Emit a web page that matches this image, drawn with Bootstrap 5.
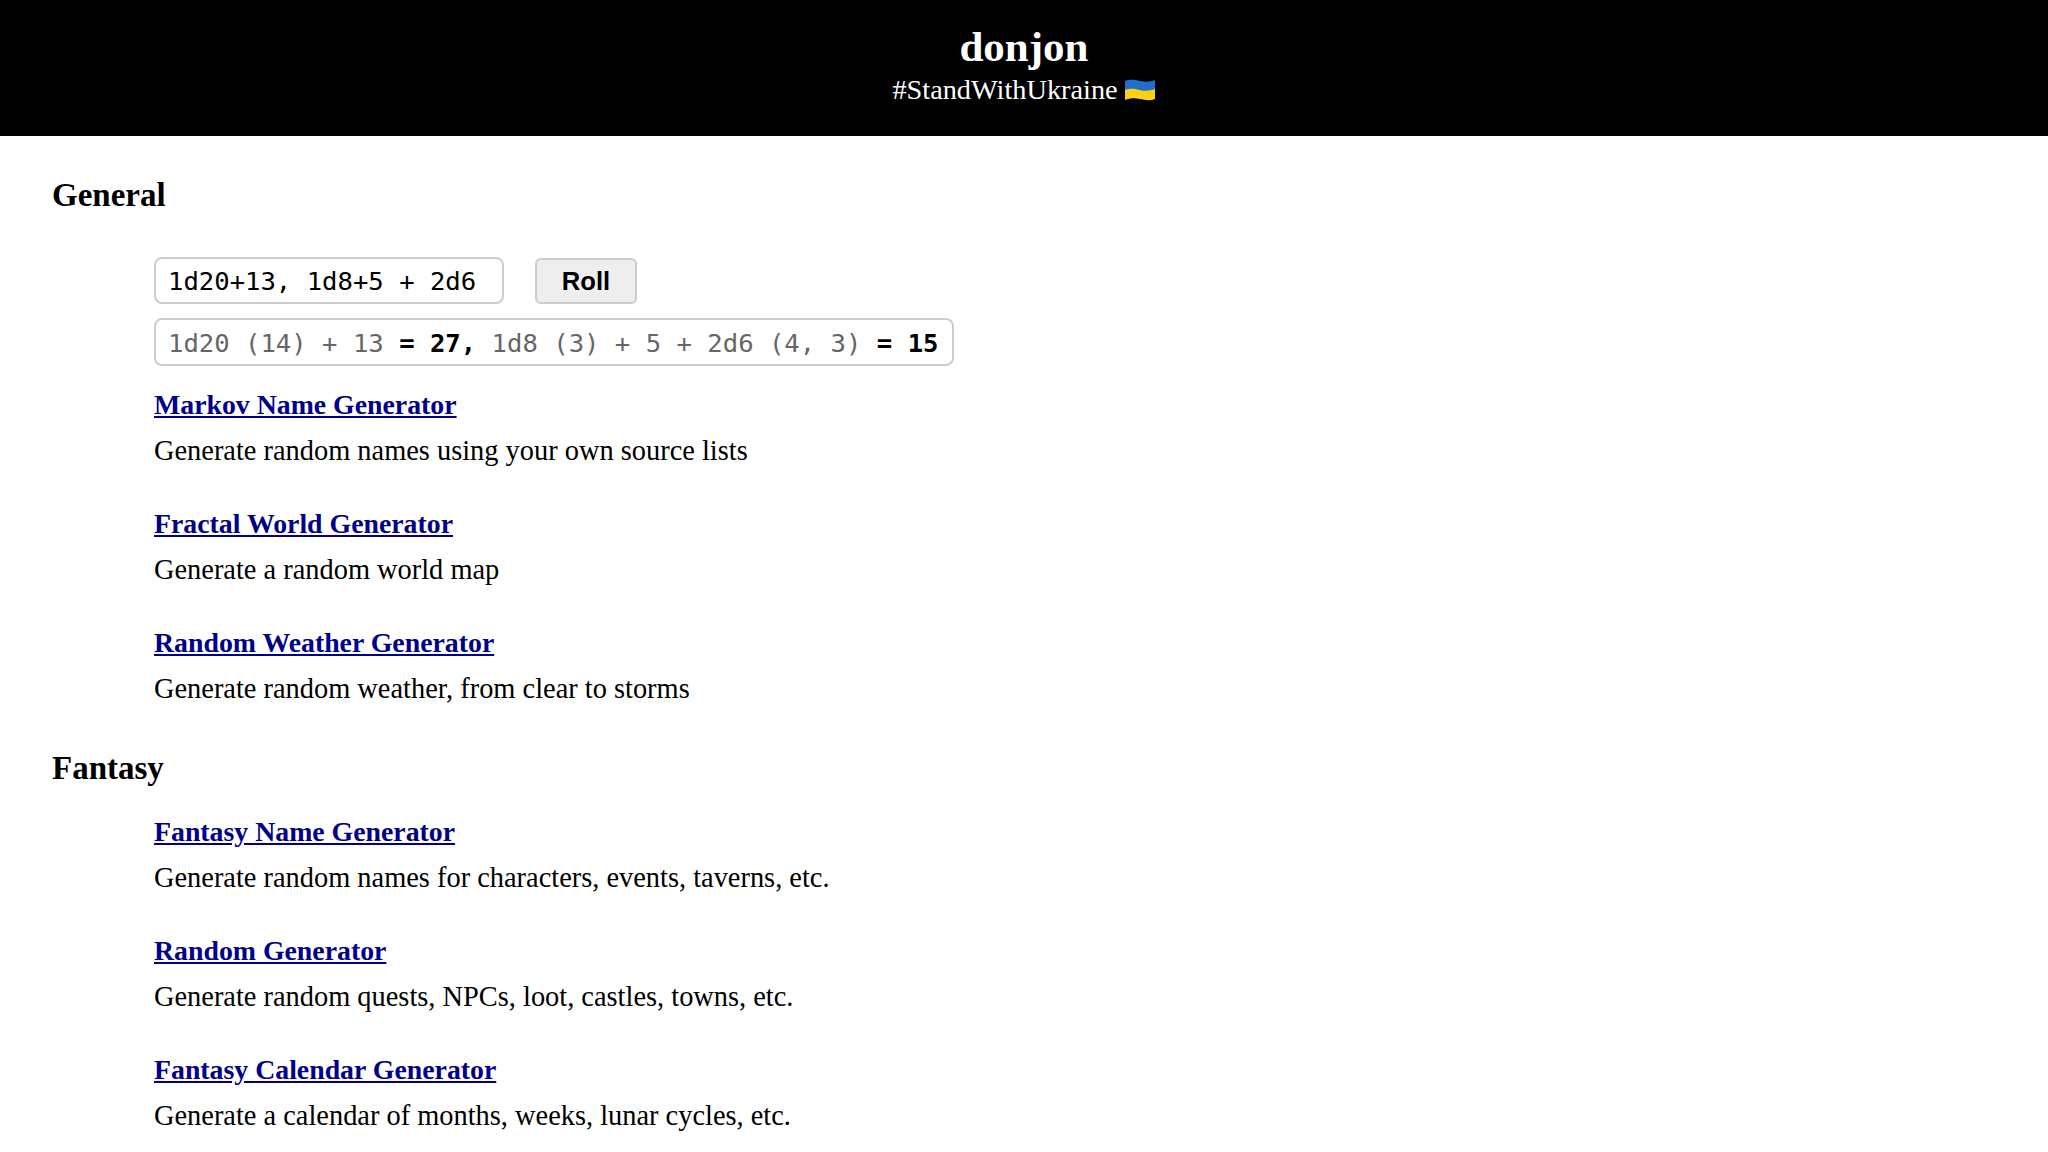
<!DOCTYPE html>
<html lang="en"><head><meta charset="utf-8"><title>donjon</title>
<link href="https://cdn.jsdelivr.net/npm/bootstrap@5.3.0/dist/css/bootstrap.min.css" rel="stylesheet">
<style>
html,body{height:1152px;overflow:hidden}
body{background:#fff;color:#000;font-family:"Liberation Serif",serif;font-size:28.4px}
.site-head{background:#000;color:#fff;height:136px;padding-top:24px;text-align:center}
.site-title{font-size:43px;font-weight:700;line-height:46px;margin:0}
.site-tag{font-size:28.3px;line-height:30px;margin-top:5px;display:flex;justify-content:center;align-items:center;gap:6px}
.main-wrap{padding:0 52px}
.sec-title{font-size:33px;font-weight:700;line-height:40px;margin:0}
.sec-general{margin-top:39px}
.sec-fantasy{margin-top:43px}
.tool-list{padding-left:102px}
.dice-row{margin-top:42px;gap:31px;align-items:flex-start}
.dice-field{font-family:"DejaVu Sans Mono",monospace;font-size:25.6px;line-height:30px;border:2px solid #ccc;border-radius:8px;padding:6px 12px;height:47px;background:#fff;color:#000;white-space:nowrap}
.dice-input{width:350px}
.dice-btn{font-family:"Liberation Sans",sans-serif;font-weight:700;font-size:25.6px;width:102px;height:46px;padding:0;background:#eee;border:2px solid #ccc;border-radius:6px;color:#000;margin-top:1px}
.dice-out{width:800px;height:48px;margin-top:14px;color:#666;padding-top:8px}
.dice-out b{color:#000}
.tool-link{display:block;font-size:27.8px;font-weight:700;line-height:32px;color:#00008b;margin:0}
.tool-link a{color:#00008b;text-decoration:underline}
.tool-desc{line-height:32px;margin:14px 0 0}
.tool-item{margin-bottom:41px}
.first-item{margin-top:23px}
.after-head{margin-top:28px}
</style></head><body>
<header class="site-head">
<h1 class="site-title">donjon</h1>
<div class="site-tag"><span>#StandWithUkraine</span>
<svg width="32" height="24" viewBox="0 0 32 24"><path d="M1 3c6-2 10-1 15 0s10 1 15-1v10c-5 2-10 1-15 0S6 11 1 13z" fill="#1f6fd0"/><path d="M1 12c6-2 10-1 15 0s10 1 15-1v10c-5 2-10 1-15 0S6 20 1 22z" fill="#fdd017"/></svg></div>
</header>
<main class="main-wrap">
<h2 class="sec-title sec-general">General</h2>
<div class="tool-list">
<div class="d-flex dice-row"><input class="dice-field dice-input" value="1d20+13, 1d8+5 + 2d6" aria-label="Dice"><button class="btn dice-btn" type="button">Roll</button></div>
<div class="dice-field dice-out">1d20 (14) + 13 <b>= 27,</b> 1d8 (3) + 5 + 2d6 (4, 3) <b>= 15</b></div>
<div class="tool-item first-item"><p class="tool-link"><a href="#">Markov Name Generator</a></p><p class="tool-desc">Generate random names using your own source lists</p></div>
<div class="tool-item"><p class="tool-link"><a href="#">Fractal World Generator</a></p><p class="tool-desc">Generate a random world map</p></div>
<div class="tool-item"><p class="tool-link"><a href="#">Random Weather Generator</a></p><p class="tool-desc">Generate random weather, from clear to storms</p></div>
</div>
<h2 class="sec-title sec-fantasy">Fantasy</h2>
<div class="tool-list">
<div class="tool-item after-head"><p class="tool-link"><a href="#">Fantasy Name Generator</a></p><p class="tool-desc">Generate random names for characters, events, taverns, etc.</p></div>
<div class="tool-item"><p class="tool-link"><a href="#">Random Generator</a></p><p class="tool-desc">Generate random quests, NPCs, loot, castles, towns, etc.</p></div>
<div class="tool-item"><p class="tool-link"><a href="#">Fantasy Calendar Generator</a></p><p class="tool-desc">Generate a calendar of months, weeks, lunar cycles, etc.</p></div>
</div>
</main>
<script src="https://cdn.jsdelivr.net/npm/bootstrap@5.3.0/dist/js/bootstrap.bundle.min.js"></script>
</body></html>
